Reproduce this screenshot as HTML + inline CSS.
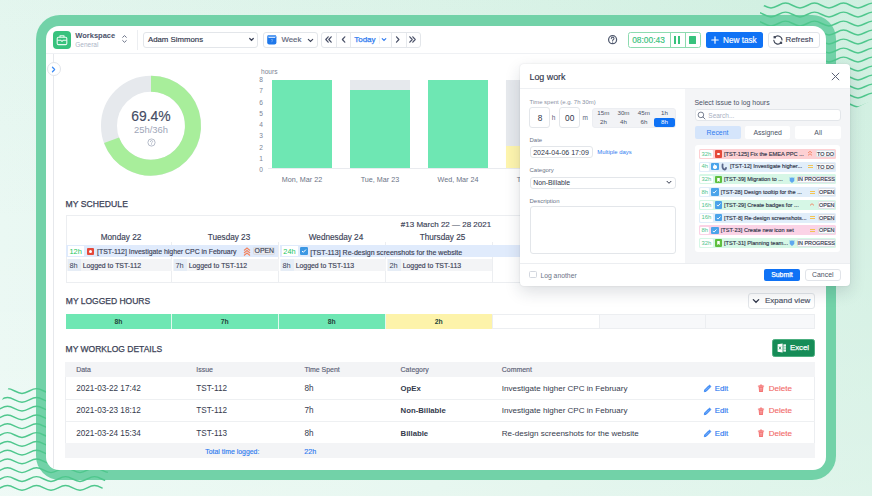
<!DOCTYPE html>
<html><head><meta charset="utf-8">
<style>
*{box-sizing:border-box;margin:0;padding:0}
html,body{width:872px;height:496px;overflow:hidden}
body{font-family:"Liberation Sans",sans-serif;position:relative;background:linear-gradient(180deg,rgba(100,200,150,0.05) 0%,rgba(255,255,255,0) 45%,rgba(255,255,255,0.22) 100%),linear-gradient(90deg,#eaf8f3 0%,#e1f5ec 50%,#d5f1e4 100%);color:#374151}
.a{position:absolute}
.t{position:absolute;white-space:nowrap;line-height:1}
#frame{left:36px;top:15px;width:800px;height:465px;border-radius:24px;background:#72d2a8}
#waves{left:0;top:0;width:872px;height:496px}
#panel{left:46px;top:26px;width:780px;height:444px;border-radius:13px;background:#fff;overflow:hidden}
.m{-webkit-text-stroke:0.25px currentColor}
.n{-webkit-text-stroke:0.15px currentColor}
.box{position:absolute;border:1px solid #e3e6ea;border-radius:3px;background:#fff}
</style></head>
<body>
<div id="frame" class="a"></div>
<svg id="waves" class="a" width="872" height="496" viewBox="0 0 872 496"><defs><clipPath id="c1"><polygon points="769,0 872,0 872,100 856,108 760,108 760,10"/></clipPath><clipPath id="c2"><polygon points="13,380 150,380 150,466 110,466 100,496 0,496 0,404 4,396"/></clipPath></defs><g fill="none" stroke="#4fc78d" stroke-width="1.45"><g clip-path="url(#c1)"><path d="M756.5,3.1C761.8,3.1 765.7,7.9 771.0,7.9C776.3,7.9 780.2,3.1 785.5,3.1C790.8,3.1 794.7,7.9 800.0,7.9C805.3,7.9 809.2,3.1 814.5,3.1C819.8,3.1 823.7,7.9 829.0,7.9C834.3,7.9 838.2,3.1 843.5,3.1C848.8,3.1 852.7,7.9 858.0,7.9C863.3,7.9 867.2,3.1 872.5,3.1C877.8,3.1 881.7,7.9 887.0,7.9"/><path d="M756.5,12.1C761.8,12.1 765.7,16.9 771.0,16.9C776.3,16.9 780.2,12.1 785.5,12.1C790.8,12.1 794.7,16.9 800.0,16.9C805.3,16.9 809.2,12.1 814.5,12.1C819.8,12.1 823.7,16.9 829.0,16.9C834.3,16.9 838.2,12.1 843.5,12.1C848.8,12.1 852.7,16.9 858.0,16.9C863.3,16.9 867.2,12.1 872.5,12.1C877.8,12.1 881.7,16.9 887.0,16.9"/><path d="M756.5,21.1C761.8,21.1 765.7,25.9 771.0,25.9C776.3,25.9 780.2,21.1 785.5,21.1C790.8,21.1 794.7,25.9 800.0,25.9C805.3,25.9 809.2,21.1 814.5,21.1C819.8,21.1 823.7,25.9 829.0,25.9C834.3,25.9 838.2,21.1 843.5,21.1C848.8,21.1 852.7,25.9 858.0,25.9C863.3,25.9 867.2,21.1 872.5,21.1C877.8,21.1 881.7,25.9 887.0,25.9"/><path d="M756.5,30.1C761.8,30.1 765.7,34.9 771.0,34.9C776.3,34.9 780.2,30.1 785.5,30.1C790.8,30.1 794.7,34.9 800.0,34.9C805.3,34.9 809.2,30.1 814.5,30.1C819.8,30.1 823.7,34.9 829.0,34.9C834.3,34.9 838.2,30.1 843.5,30.1C848.8,30.1 852.7,34.9 858.0,34.9C863.3,34.9 867.2,30.1 872.5,30.1C877.8,30.1 881.7,34.9 887.0,34.9"/><path d="M756.5,39.1C761.8,39.1 765.7,43.9 771.0,43.9C776.3,43.9 780.2,39.1 785.5,39.1C790.8,39.1 794.7,43.9 800.0,43.9C805.3,43.9 809.2,39.1 814.5,39.1C819.8,39.1 823.7,43.9 829.0,43.9C834.3,43.9 838.2,39.1 843.5,39.1C848.8,39.1 852.7,43.9 858.0,43.9C863.3,43.9 867.2,39.1 872.5,39.1C877.8,39.1 881.7,43.9 887.0,43.9"/><path d="M756.5,48.1C761.8,48.1 765.7,52.9 771.0,52.9C776.3,52.9 780.2,48.1 785.5,48.1C790.8,48.1 794.7,52.9 800.0,52.9C805.3,52.9 809.2,48.1 814.5,48.1C819.8,48.1 823.7,52.9 829.0,52.9C834.3,52.9 838.2,48.1 843.5,48.1C848.8,48.1 852.7,52.9 858.0,52.9C863.3,52.9 867.2,48.1 872.5,48.1C877.8,48.1 881.7,52.9 887.0,52.9"/><path d="M756.5,57.1C761.8,57.1 765.7,61.9 771.0,61.9C776.3,61.9 780.2,57.1 785.5,57.1C790.8,57.1 794.7,61.9 800.0,61.9C805.3,61.9 809.2,57.1 814.5,57.1C819.8,57.1 823.7,61.9 829.0,61.9C834.3,61.9 838.2,57.1 843.5,57.1C848.8,57.1 852.7,61.9 858.0,61.9C863.3,61.9 867.2,57.1 872.5,57.1C877.8,57.1 881.7,61.9 887.0,61.9"/><path d="M756.5,66.1C761.8,66.1 765.7,70.9 771.0,70.9C776.3,70.9 780.2,66.1 785.5,66.1C790.8,66.1 794.7,70.9 800.0,70.9C805.3,70.9 809.2,66.1 814.5,66.1C819.8,66.1 823.7,70.9 829.0,70.9C834.3,70.9 838.2,66.1 843.5,66.1C848.8,66.1 852.7,70.9 858.0,70.9C863.3,70.9 867.2,66.1 872.5,66.1C877.8,66.1 881.7,70.9 887.0,70.9"/><path d="M756.5,75.1C761.8,75.1 765.7,79.9 771.0,79.9C776.3,79.9 780.2,75.1 785.5,75.1C790.8,75.1 794.7,79.9 800.0,79.9C805.3,79.9 809.2,75.1 814.5,75.1C819.8,75.1 823.7,79.9 829.0,79.9C834.3,79.9 838.2,75.1 843.5,75.1C848.8,75.1 852.7,79.9 858.0,79.9C863.3,79.9 867.2,75.1 872.5,75.1C877.8,75.1 881.7,79.9 887.0,79.9"/><path d="M756.5,84.1C761.8,84.1 765.7,88.9 771.0,88.9C776.3,88.9 780.2,84.1 785.5,84.1C790.8,84.1 794.7,88.9 800.0,88.9C805.3,88.9 809.2,84.1 814.5,84.1C819.8,84.1 823.7,88.9 829.0,88.9C834.3,88.9 838.2,84.1 843.5,84.1C848.8,84.1 852.7,88.9 858.0,88.9C863.3,88.9 867.2,84.1 872.5,84.1C877.8,84.1 881.7,88.9 887.0,88.9"/><path d="M756.5,93.1C761.8,93.1 765.7,97.9 771.0,97.9C776.3,97.9 780.2,93.1 785.5,93.1C790.8,93.1 794.7,97.9 800.0,97.9C805.3,97.9 809.2,93.1 814.5,93.1C819.8,93.1 823.7,97.9 829.0,97.9C834.3,97.9 838.2,93.1 843.5,93.1C848.8,93.1 852.7,97.9 858.0,97.9C863.3,97.9 867.2,93.1 872.5,93.1C877.8,93.1 881.7,97.9 887.0,97.9"/><path d="M829.0,106.9C834.3,106.9 838.2,102.1 843.5,102.1C848.8,102.1 852.7,106.9 858.0,106.9C863.3,106.9 867.2,102.1 872.5,102.1"/></g><g clip-path="url(#c2)"><path d="M7.5,388.6C12.8,388.6 16.7,393.4 22.0,393.4C27.3,393.4 31.2,388.6 36.5,388.6C41.8,388.6 45.7,393.4 51.0,393.4C56.3,393.4 60.2,388.6 65.5,388.6C70.8,388.6 74.7,393.4 80.0,393.4C85.3,393.4 89.2,388.6 94.5,388.6C99.8,388.6 103.7,393.4 109.0,393.4C114.3,393.4 118.2,388.6 123.5,388.6C128.8,388.6 132.7,393.4 138.0,393.4C143.3,393.4 147.2,388.6 152.5,388.6"/><path d="M-7.0,402.2C-1.7,402.2 2.2,397.4 7.5,397.4C12.8,397.4 16.7,402.2 22.0,402.2C27.3,402.2 31.2,397.4 36.5,397.4C41.8,397.4 45.7,402.2 51.0,402.2C56.3,402.2 60.2,397.4 65.5,397.4C70.8,397.4 74.7,402.2 80.0,402.2C85.3,402.2 89.2,397.4 94.5,397.4C99.8,397.4 103.7,402.2 109.0,402.2C114.3,402.2 118.2,397.4 123.5,397.4C128.8,397.4 132.7,402.2 138.0,402.2C143.3,402.2 147.2,397.4 152.5,397.4"/><path d="M-7.0,411.0C-1.7,411.0 2.2,406.2 7.5,406.2C12.8,406.2 16.7,411.0 22.0,411.0C27.3,411.0 31.2,406.2 36.5,406.2C41.8,406.2 45.7,411.0 51.0,411.0C56.3,411.0 60.2,406.2 65.5,406.2C70.8,406.2 74.7,411.0 80.0,411.0C85.3,411.0 89.2,406.2 94.5,406.2C99.8,406.2 103.7,411.0 109.0,411.0C114.3,411.0 118.2,406.2 123.5,406.2C128.8,406.2 132.7,411.0 138.0,411.0C143.3,411.0 147.2,406.2 152.5,406.2"/><path d="M-7.0,419.8C-1.7,419.8 2.2,415.0 7.5,415.0C12.8,415.0 16.7,419.8 22.0,419.8C27.3,419.8 31.2,415.0 36.5,415.0C41.8,415.0 45.7,419.8 51.0,419.8C56.3,419.8 60.2,415.0 65.5,415.0C70.8,415.0 74.7,419.8 80.0,419.8C85.3,419.8 89.2,415.0 94.5,415.0C99.8,415.0 103.7,419.8 109.0,419.8C114.3,419.8 118.2,415.0 123.5,415.0C128.8,415.0 132.7,419.8 138.0,419.8C143.3,419.8 147.2,415.0 152.5,415.0"/><path d="M-7.0,428.6C-1.7,428.6 2.2,423.8 7.5,423.8C12.8,423.8 16.7,428.6 22.0,428.6C27.3,428.6 31.2,423.8 36.5,423.8C41.8,423.8 45.7,428.6 51.0,428.6C56.3,428.6 60.2,423.8 65.5,423.8C70.8,423.8 74.7,428.6 80.0,428.6C85.3,428.6 89.2,423.8 94.5,423.8C99.8,423.8 103.7,428.6 109.0,428.6C114.3,428.6 118.2,423.8 123.5,423.8C128.8,423.8 132.7,428.6 138.0,428.6C143.3,428.6 147.2,423.8 152.5,423.8"/><path d="M-7.0,437.4C-1.7,437.4 2.2,432.6 7.5,432.6C12.8,432.6 16.7,437.4 22.0,437.4C27.3,437.4 31.2,432.6 36.5,432.6C41.8,432.6 45.7,437.4 51.0,437.4C56.3,437.4 60.2,432.6 65.5,432.6C70.8,432.6 74.7,437.4 80.0,437.4C85.3,437.4 89.2,432.6 94.5,432.6C99.8,432.6 103.7,437.4 109.0,437.4C114.3,437.4 118.2,432.6 123.5,432.6C128.8,432.6 132.7,437.4 138.0,437.4C143.3,437.4 147.2,432.6 152.5,432.6"/><path d="M-7.0,446.2C-1.7,446.2 2.2,441.4 7.5,441.4C12.8,441.4 16.7,446.2 22.0,446.2C27.3,446.2 31.2,441.4 36.5,441.4C41.8,441.4 45.7,446.2 51.0,446.2C56.3,446.2 60.2,441.4 65.5,441.4C70.8,441.4 74.7,446.2 80.0,446.2C85.3,446.2 89.2,441.4 94.5,441.4C99.8,441.4 103.7,446.2 109.0,446.2C114.3,446.2 118.2,441.4 123.5,441.4C128.8,441.4 132.7,446.2 138.0,446.2C143.3,446.2 147.2,441.4 152.5,441.4"/><path d="M-7.0,455.0C-1.7,455.0 2.2,450.2 7.5,450.2C12.8,450.2 16.7,455.0 22.0,455.0C27.3,455.0 31.2,450.2 36.5,450.2C41.8,450.2 45.7,455.0 51.0,455.0C56.3,455.0 60.2,450.2 65.5,450.2C70.8,450.2 74.7,455.0 80.0,455.0C85.3,455.0 89.2,450.2 94.5,450.2C99.8,450.2 103.7,455.0 109.0,455.0C114.3,455.0 118.2,450.2 123.5,450.2C128.8,450.2 132.7,455.0 138.0,455.0C143.3,455.0 147.2,450.2 152.5,450.2"/><path d="M-7.0,463.8C-1.7,463.8 2.2,459.0 7.5,459.0C12.8,459.0 16.7,463.8 22.0,463.8C27.3,463.8 31.2,459.0 36.5,459.0C41.8,459.0 45.7,463.8 51.0,463.8C56.3,463.8 60.2,459.0 65.5,459.0C70.8,459.0 74.7,463.8 80.0,463.8C85.3,463.8 89.2,459.0 94.5,459.0C99.8,459.0 103.7,463.8 109.0,463.8C114.3,463.8 118.2,459.0 123.5,459.0C128.8,459.0 132.7,463.8 138.0,463.8C143.3,463.8 147.2,459.0 152.5,459.0"/><path d="M-7.0,472.6C-1.7,472.6 2.2,467.8 7.5,467.8C12.8,467.8 16.7,472.6 22.0,472.6C27.3,472.6 31.2,467.8 36.5,467.8C41.8,467.8 45.7,472.6 51.0,472.6C56.3,472.6 60.2,467.8 65.5,467.8C70.8,467.8 74.7,472.6 80.0,472.6C85.3,472.6 89.2,467.8 94.5,467.8C99.8,467.8 103.7,472.6 109.0,472.6C114.3,472.6 118.2,467.8 123.5,467.8C128.8,467.8 132.7,472.6 138.0,472.6"/><path d="M-7.0,481.4C-1.7,481.4 2.2,476.6 7.5,476.6C12.8,476.6 16.7,481.4 22.0,481.4C27.3,481.4 31.2,476.6 36.5,476.6C41.8,476.6 45.7,481.4 51.0,481.4C56.3,481.4 60.2,476.6 65.5,476.6C70.8,476.6 74.7,481.4 80.0,481.4C85.3,481.4 89.2,476.6 94.5,476.6C99.8,476.6 103.7,481.4 109.0,481.4C114.3,481.4 118.2,476.6 123.5,476.6C128.8,476.6 132.7,481.4 138.0,481.4"/><path d="M-7.0,490.2C-1.7,490.2 2.2,485.4 7.5,485.4C12.8,485.4 16.7,490.2 22.0,490.2C27.3,490.2 31.2,485.4 36.5,485.4C41.8,485.4 45.7,490.2 51.0,490.2C56.3,490.2 60.2,485.4 65.5,485.4C70.8,485.4 74.7,490.2 80.0,490.2C85.3,490.2 89.2,485.4 94.5,485.4C99.8,485.4 103.7,490.2 109.0,490.2C114.3,490.2 118.2,485.4 123.5,485.4C128.8,485.4 132.7,490.2 138.0,490.2"/></g></g></svg>
<div id="panel" class="a"></div>
<div id="content" class="a" style="left:0;top:0;width:872px;height:496px">
<!-- header -->
<div class="a" style="left:46px;top:53px;width:780px;height:1px;background:#eff1f4"></div>
<div class="a" style="left:53px;top:54px;width:1px;height:414px;background:#e6e8ec"></div>
<div class="a" style="left:46.5px;top:62.2px;width:14px;height:14px;border-radius:50%;border:1px solid #e1e4e9;background:#fff"></div>
<svg class="a" style="left:47px;top:62.7px" width="13" height="13" viewBox="0 0 13 13"><path d="M5.5 4.3 L7.6 6.5 L5.5 8.7" fill="none" stroke="#3a8af5" stroke-width="1.3" stroke-linecap="round" stroke-linejoin="round"/></svg>
<div class="a" style="left:53.2px;top:31px;width:18px;height:17.7px;border-radius:4px;background:#38c27d"></div>
<svg class="a" style="left:53.2px;top:31px" width="18" height="18" viewBox="0 0 18 18"><g fill="none" stroke="#e9fbf1" stroke-width="1.1" stroke-linejoin="round"><rect x="4.2" y="6.2" width="9.6" height="7.4" rx="1.2"/><path d="M7 6.2 V4.8 h4 V6.2"/><path d="M4.2 9.2 H7.6 L9 10.4 L10.4 9.2 H13.8"/></g></svg>
<div class="t" style="left:75.3px;top:31.6px;font-size:7.5px;font-weight:bold;color:#4a5169">Workspace</div>
<div class="t" style="left:75.3px;top:41.8px;font-size:6.5px;color:#acb4c7">General</div>
<svg class="a" style="left:121px;top:33px" width="7" height="12" viewBox="0 0 7 12"><path d="M1.7 4.3 L3.5 2.6 L5.3 4.3 M1.7 7.6 L3.5 9.3 L5.3 7.6" fill="none" stroke="#6b7388" stroke-width="1" stroke-linecap="round"/></svg>
<div class="a" style="left:137px;top:30px;width:1px;height:20px;background:#eceef1"></div>
<div class="box" style="left:143px;top:32.3px;width:115px;height:15.4px"></div>
<div class="t n" style="left:148px;top:36px;font-size:7.8px;color:#30364a">Adam Simmons</div>
<svg class="a" style="left:247.5px;top:37px" width="7" height="5" viewBox="0 0 7 5"><path d="M1.7 1.5 L3.5 3.3 L5.3 1.5" fill="none" stroke="#3d4459" stroke-width="1.25" stroke-linecap="round"/></svg>
<div class="box" style="left:262.5px;top:32.3px;width:55px;height:15.4px"></div>
<svg class="a" style="left:267px;top:35px" width="10" height="10" viewBox="0 0 10 10"><rect x="0.2" y="0.1" width="9.2" height="9.3" rx="2" fill="#1f78ea"/><path d="M0.2 2.1 a2 2 0 0 1 2 -2 h5.2 a2 2 0 0 1 2 2 v0.6 h-9.2 z" fill="#5c9ff2"/><rect x="1.6" y="2" width="6.4" height="0.9" fill="#d9e8ff"/><path d="M3.9 4.6 h1.8 l-1 2.6" fill="none" stroke="#7fb3f5" stroke-width="0.7"/></svg>
<div class="t n" style="left:281.5px;top:36px;font-size:7.8px;color:#5d6478">Week</div>
<svg class="a" style="left:307px;top:37.5px" width="7" height="5" viewBox="0 0 7 5"><path d="M1.3 1.3 L3.5 3.4 L5.7 1.3" fill="none" stroke="#3d4459" stroke-width="1.1" stroke-linecap="round"/></svg>
<div class="box" style="left:321px;top:32.3px;width:99.5px;height:15.4px"></div>
<div class="a" style="left:335.5px;top:33px;width:1px;height:14px;background:#e6e9ed"></div>
<div class="a" style="left:350.3px;top:33px;width:1px;height:14px;background:#e6e9ed"></div>
<div class="a" style="left:379.3px;top:36px;width:1px;height:8px;background:#eef0f3"></div>
<div class="a" style="left:390.7px;top:33px;width:1px;height:14px;background:#e6e9ed"></div>
<div class="a" style="left:405.5px;top:33px;width:1px;height:14px;background:#e6e9ed"></div>
<svg class="a" style="left:321px;top:32.3px" width="100" height="15" viewBox="0 0 100 15"><g fill="none" stroke="#4a5168" stroke-width="1.2" stroke-linecap="round" stroke-linejoin="round"><path d="M7.2 4.8 L4.8 7.5 L7.2 10.2 M10.2 4.8 L7.8 7.5 L10.2 10.2"/><path d="M23.8 4.8 L21.4 7.5 L23.8 10.2"/><path d="M75.5 4.8 L77.9 7.5 L75.5 10.2"/><path d="M88.8 4.8 L91.2 7.5 L88.8 10.2 M91.8 4.8 L94.2 7.5 L91.8 10.2"/></g><path d="M61.2 6.6 L63 8.4 L64.8 6.6" fill="none" stroke="#2f7bf0" stroke-width="1.1" stroke-linecap="round"/></svg>
<div class="t m" style="left:354.2px;top:36px;font-size:8px;color:#2f7bf0">Today</div>
<svg class="a" style="left:607px;top:34px" width="11" height="11" viewBox="0 0 11 11"><circle cx="5.6" cy="5.7" r="4" fill="none" stroke="#4f586d" stroke-width="1.25"/><path d="M4.3 4.6 a1.35 1.35 0 1 1 1.9 1.2 c-0.45 0.2 -0.55 0.45 -0.55 0.85" fill="none" stroke="#4f586d" stroke-width="1.05" stroke-linecap="round"/><circle cx="5.65" cy="8.05" r="0.6" fill="#4f586d"/></svg>
<div class="a" style="left:627.7px;top:32.2px;width:73px;height:15.5px;border:1px solid #8ddbb0;border-radius:2.5px;background:#fff"></div>
<div class="a" style="left:669.6px;top:32.2px;width:1px;height:15.5px;background:#8ddbb0"></div>
<div class="a" style="left:684.7px;top:32.2px;width:1px;height:15.5px;background:#8ddbb0"></div>
<div class="t n" style="left:632.2px;top:35.6px;font-size:8.4px;color:#37c27c">08:00:43</div>
<div class="a" style="left:674.2px;top:36.2px;width:2.3px;height:7.4px;background:#37c27c"></div>
<div class="a" style="left:678.1px;top:36.2px;width:2.3px;height:7.4px;background:#37c27c"></div>
<div class="a" style="left:688.8px;top:36px;width:7.6px;height:7.6px;background:#37c27c;border-radius:0.5px"></div>
<div class="a" style="left:705.8px;top:32.2px;width:57px;height:15.5px;border-radius:2.5px;background:#0f72f5"></div>
<svg class="a" style="left:710px;top:35px" width="10" height="10" viewBox="0 0 10 10"><path d="M5 1.8 V8.2 M1.8 5 H8.2" stroke="#fff" stroke-width="1.2" stroke-linecap="round"/></svg>
<div class="t n" style="left:723px;top:36.6px;font-size:8.2px;color:#fff">New task</div>
<div class="box" style="left:768.3px;top:32.2px;width:52.2px;height:15.5px;border-color:#e1e4e9"></div>
<svg class="a" style="left:772px;top:33.5px" width="12" height="12" viewBox="0 0 12 12"><g fill="none" stroke="#414859" stroke-width="1.1" stroke-linecap="round"><path d="M2.85 3.26 A4.1 4.1 0 0 1 10.00 6.00"/><path d="M8.95 8.74 A4.1 4.1 0 0 1 1.82 6.36"/></g><rect x="1.55" y="2.06" width="2.3" height="2.3" fill="#414859"/><rect x="7.85" y="7.64" width="2.3" height="2.3" fill="#414859"/></svg>
<div class="t n" style="left:785.5px;top:36.3px;font-size:7.9px;color:#3e4459">Refresh</div>

<!-- donut -->
<svg class="a" style="left:0;top:0" width="300" height="200" viewBox="0 0 300 200">
<circle cx="151" cy="125.7" r="42" fill="none" stroke="#e6e9ed" stroke-width="16"/>
<path d="M151,83.7 A42,42 0 1 1 111.57,140.18" fill="none" stroke="#a8ee9b" stroke-width="16"/>
</svg>
<div class="t n" style="left:131.3px;top:109.8px;font-size:13.9px;color:#434b63">69.4%</div>
<div class="t" style="left:134px;top:125px;font-size:9.4px;color:#9ea6b8">25h/36h</div>
<svg class="a" style="left:146.5px;top:138px" width="9" height="9" viewBox="0 0 9 9"><circle cx="4.5" cy="4.5" r="3.6" fill="none" stroke="#a3abbd" stroke-width="0.8"/><path d="M3.4 3.6 a1.1 1.1 0 1 1 1.6 1 c-0.4 0.2 -0.5 0.4 -0.5 0.7" fill="none" stroke="#a3abbd" stroke-width="0.75" stroke-linecap="round"/><circle cx="4.5" cy="6.5" r="0.45" fill="#a3abbd"/></svg>

<!-- chart -->
<div class="t" style="left:261px;top:69.1px;font-size:6.6px;color:#7b8394">hours</div>
<div class="t" style="left:257px;top:167.10px;width:8px;text-align:center;font-size:6.6px;color:#7b8394">0</div><div class="t" style="left:257px;top:155.85px;width:8px;text-align:center;font-size:6.6px;color:#7b8394">1</div><div class="t" style="left:257px;top:144.60px;width:8px;text-align:center;font-size:6.6px;color:#7b8394">2</div><div class="t" style="left:257px;top:133.35px;width:8px;text-align:center;font-size:6.6px;color:#7b8394">3</div><div class="t" style="left:257px;top:122.10px;width:8px;text-align:center;font-size:6.6px;color:#7b8394">4</div><div class="t" style="left:257px;top:110.85px;width:8px;text-align:center;font-size:6.6px;color:#7b8394">5</div><div class="t" style="left:257px;top:99.60px;width:8px;text-align:center;font-size:6.6px;color:#7b8394">6</div><div class="t" style="left:257px;top:88.35px;width:8px;text-align:center;font-size:6.6px;color:#7b8394">7</div><div class="t" style="left:257px;top:77.10px;width:8px;text-align:center;font-size:6.6px;color:#7b8394">8</div>
<div class="a" style="left:268px;top:168px;width:260px;height:1px;background:#e9ebef"></div>
<div class="a" style="left:272px;top:80px;width:60px;height:88px;background:#6ee7b3"></div>
<div class="a" style="left:350px;top:80px;width:60px;height:88px;background:#e6e9ed"></div>
<div class="a" style="left:350px;top:89.6px;width:60px;height:78.4px;background:#6ee7b3"></div>
<div class="a" style="left:428px;top:80px;width:60px;height:88px;background:#6ee7b3"></div>
<div class="a" style="left:506px;top:80px;width:60px;height:88px;background:#e6e9ed"></div>
<div class="a" style="left:506px;top:145.7px;width:60px;height:22.3px;background:#fef5ae"></div>
<div class="t" style="left:272px;top:176px;width:60px;text-align:center;font-size:7.2px;color:#6b7386">Mon, Mar 22</div>
<div class="t" style="left:350px;top:176px;width:60px;text-align:center;font-size:7.2px;color:#6b7386">Tue, Mar 23</div>
<div class="t" style="left:428px;top:176px;width:60px;text-align:center;font-size:7.2px;color:#6b7386">Wed, Mar 24</div>
<div class="t" style="left:506px;top:176px;width:60px;text-align:center;font-size:7.2px;color:#6b7386">Thu, Mar 25</div>

<!-- schedule -->
<div class="t m" style="left:65.5px;top:200px;font-size:8.6px;color:#3b4256;letter-spacing:0.05px">MY SCHEDULE</div>
<div class="a" style="left:65.5px;top:215.3px;width:749.5px;height:67.4px;border:1px solid #eceef1;background:#fff"></div>
<div class="a" style="left:171px;top:242.3px;width:1px;height:39.4px;background:#eceef1"></div><div class="a" style="left:278px;top:242.3px;width:1px;height:39.4px;background:#eceef1"></div><div class="a" style="left:385px;top:242.3px;width:1px;height:39.4px;background:#eceef1"></div><div class="a" style="left:492px;top:242.3px;width:1px;height:39.4px;background:#eceef1"></div><div class="a" style="left:598.5px;top:242.3px;width:1px;height:39.4px;background:#eceef1"></div><div class="a" style="left:705px;top:242.3px;width:1px;height:39.4px;background:#eceef1"></div><div class="t n" style="left:346px;top:221.2px;width:200px;text-align:center;font-size:8px;color:#3b4256">#13 March 22 — 28 2021</div><div class="t n" style="left:68px;top:233.6px;width:106px;text-align:center;font-size:8.2px;color:#3b4256">Monday 22</div><div class="t n" style="left:175.5px;top:233.6px;width:107px;text-align:center;font-size:8.2px;color:#3b4256">Tuesday 23</div><div class="t n" style="left:282.5px;top:233.6px;width:107px;text-align:center;font-size:8.2px;color:#3b4256">Wednesday 24</div><div class="t n" style="left:389.5px;top:233.6px;width:106px;text-align:center;font-size:8.2px;color:#3b4256">Thursday 25</div><div class="t n" style="left:495.5px;top:233.6px;width:107px;text-align:center;font-size:8.2px;color:#3b4256">Friday 26</div><div class="t n" style="left:602.5px;top:233.6px;width:106px;text-align:center;font-size:8.2px;color:#3b4256">Saturday 27</div><div class="t n" style="left:708.5px;top:233.6px;width:110px;text-align:center;font-size:8.2px;color:#3b4256">Sunday 28</div>
<div class="a" style="left:66.2px;top:244.8px;width:211.8px;height:12.3px;background:#e0ebfc"></div>
<div class="a" style="left:67.6px;top:246.2px;width:16.4px;height:10px;background:#fff"></div>
<div class="t" style="left:69.5px;top:247.9px;font-size:7.4px;color:#22c55e">12h</div>
<div class="a" style="left:86.5px;top:247.6px;width:7.9px;height:7.4px;border-radius:1px;background:#e5493a"></div>
<div class="a" style="left:89px;top:249.8px;width:3px;height:3px;border-radius:50%;background:#fff"></div>
<div class="t n" style="left:97.1px;top:249.2px;font-size:6.9px;color:#3b4256">[TST-112] Investigate higher CPC in February</div>
<svg class="a" style="left:243px;top:246.5px" width="8" height="9" viewBox="0 0 8 9"><path d="M1 3.5 L4 1 L7 3.5 M1 6 L4 3.5 L7 6 M1 8.5 L4 6 L7 8.5" fill="none" stroke="#f2835f" stroke-width="1.1"/></svg>
<div class="a" style="left:253.2px;top:246.6px;width:22.3px;height:8.9px;border-radius:1.5px;background:#e6e8ed;border:0.6px solid #dadde3"></div>
<div class="t n" style="left:253.2px;top:248.2px;width:22.3px;text-align:center;font-size:6.9px;color:#3b4256">OPEN</div>
<div class="a" style="left:280.3px;top:244.8px;width:318px;height:12.3px;background:#e0ebfc"></div>
<div class="a" style="left:281.6px;top:246.2px;width:16px;height:10px;background:#fff"></div>
<div class="t" style="left:283.3px;top:247.9px;font-size:7.4px;color:#22c55e">24h</div>
<div class="a" style="left:300.4px;top:247.4px;width:7.4px;height:7.4px;border-radius:1.2px;background:#3b97e3"></div>
<svg class="a" style="left:300.4px;top:247.4px" width="8" height="8" viewBox="0 0 8 8"><path d="M2 4 L3.3 5.3 L5.9 2.6" fill="none" stroke="#fff" stroke-width="1"/></svg>
<div class="t n" style="left:310.3px;top:249.2px;font-size:7.04px;color:#3b4256">[TST-113] Re-design screenshots for the website</div>
<div class="a" style="left:66.5px;top:258.6px;width:105px;height:12.8px;background:#f3f4f6"></div><div class="a" style="left:68px;top:258.6px;width:12.6px;height:12.8px;background:#e6edf6"></div><div class="t" style="left:69.5px;top:262.3px;font-size:7.4px;color:#3b4256">8h</div><div class="t n" style="left:82.7px;top:262.8px;font-size:6.9px;color:#3b4256">Logged to TST-112</div><div class="a" style="left:172.5px;top:258.6px;width:106px;height:12.8px;background:#f3f4f6"></div><div class="a" style="left:174px;top:258.6px;width:12.6px;height:12.8px;background:#e6edf6"></div><div class="t" style="left:175.5px;top:262.3px;font-size:7.4px;color:#3b4256">7h</div><div class="t n" style="left:188.7px;top:262.8px;font-size:6.9px;color:#3b4256">Logged to TST-112</div><div class="a" style="left:279.5px;top:258.6px;width:106px;height:12.8px;background:#f3f4f6"></div><div class="a" style="left:281px;top:258.6px;width:12.6px;height:12.8px;background:#e6edf6"></div><div class="t" style="left:282.5px;top:262.3px;font-size:7.4px;color:#3b4256">8h</div><div class="t n" style="left:295.7px;top:262.8px;font-size:6.9px;color:#3b4256">Logged to TST-113</div><div class="a" style="left:386.5px;top:258.6px;width:105px;height:12.8px;background:#f3f4f6"></div><div class="a" style="left:388px;top:258.6px;width:12.6px;height:12.8px;background:#e6edf6"></div><div class="t" style="left:389.5px;top:262.3px;font-size:7.4px;color:#3b4256">2h</div><div class="t n" style="left:402.7px;top:262.8px;font-size:6.9px;color:#3b4256">Logged to TST-113</div>
<!-- logged hours -->
<div class="t m" style="left:65.8px;top:296.7px;font-size:8.5px;color:#3b4256">MY LOGGED HOURS</div>
<div class="box" style="left:748.3px;top:293px;width:67px;height:15.8px;border-color:#e3e6ea"></div>
<svg class="a" style="left:752px;top:297px" width="8" height="8" viewBox="0 0 8 8"><path d="M1.3 2.6 L4 5.3 L6.7 2.6" fill="none" stroke="#30364a" stroke-width="1.3" stroke-linecap="round"/></svg>
<div class="t n" style="left:765px;top:297.3px;font-size:8px;color:#4b5266">Expand view</div>
<div class="a" style="left:65.5px;top:314px;width:749.5px;height:14.7px;border:1px solid #eceef1;background:#fff"></div>
<div class="a" style="left:65.5px;top:314px;width:105.8px;height:14.7px;background:#6ee7b3;"></div><div class="t" style="left:65.5px;top:319px;width:105.8px;text-align:center;font-size:6.8px;font-weight:bold;color:#24463a">8h</div><div class="a" style="left:171.3px;top:314px;width:107.0px;height:14.7px;background:#6ee7b3;border-left:1px solid #e3f8ee;"></div><div class="t" style="left:171.3px;top:319px;width:107.0px;text-align:center;font-size:6.8px;font-weight:bold;color:#24463a">7h</div><div class="a" style="left:278.3px;top:314px;width:107.0px;height:14.7px;background:#6ee7b3;border-left:1px solid #e3f8ee;"></div><div class="t" style="left:278.3px;top:319px;width:107.0px;text-align:center;font-size:6.8px;font-weight:bold;color:#24463a">8h</div><div class="a" style="left:385.3px;top:314px;width:106.7px;height:14.7px;background:#fdf3aa;border-left:1px solid #e3f8ee;"></div><div class="t" style="left:385.3px;top:319px;width:106.7px;text-align:center;font-size:6.8px;font-weight:bold;color:#24463a">2h</div><div class="a" style="left:492px;top:314px;width:106.7px;height:14.7px;background:#fff;border-left:1px solid #eceef1;border-top:1px solid #eceef1;border-bottom:1px solid #eceef1;"></div><div class="a" style="left:598.7px;top:314px;width:106.6px;height:14.7px;background:#f7f8fa;border-left:1px solid #eceef1;border-top:1px solid #eceef1;border-bottom:1px solid #eceef1;"></div><div class="a" style="left:705.3px;top:314px;width:109.7px;height:14.7px;background:#f7f8fa;border-left:1px solid #eceef1;border-top:1px solid #eceef1;border-bottom:1px solid #eceef1;border-right:1px solid #eceef1;"></div>
<!-- worklog -->
<div class="t m" style="left:65.6px;top:344.8px;font-size:8.5px;color:#3b4256">MY WORKLOG DETAILS</div>
<div class="a" style="left:772.2px;top:339.2px;width:42.5px;height:17.6px;border-radius:2.5px;background:#168c57;border:1px solid #4caf80"></div>
<svg class="a" style="left:777px;top:343px" width="10" height="10" viewBox="0 0 10 10"><path d="M0.6 1.2 L5.6 0.6 V9.4 L0.6 8.8 Z" fill="#fff"/><path d="M2.1 3.6 L3.9 6.4 M3.9 3.6 L2.1 6.4" stroke="#168c57" stroke-width="0.8"/><rect x="6.4" y="1.4" width="2.6" height="7.2" fill="#fff"/><path d="M6.4 3.3 H9 M6.4 5 H9 M6.4 6.7 H9" stroke="#168c57" stroke-width="0.5"/></svg>
<div class="t m" style="left:790px;top:344px;font-size:7.8px;color:#fff">Excel</div>
<div class="a" style="left:65px;top:362.3px;width:750px;height:95.4px;border:1px solid #eceef1;background:#fff"></div>
<div class="a" style="left:65px;top:362.3px;width:750px;height:14.4px;background:#f3f4f6"></div>
<div class="a" style="left:65.6px;top:399px;width:749.4px;height:1px;background:#eef0f2"></div>
<div class="a" style="left:65.6px;top:421px;width:749.4px;height:1px;background:#eef0f2"></div>
<div class="a" style="left:65px;top:443.2px;width:750px;height:14.5px;background:#f3f4f6"></div>
<div class="t n" style="left:76.2px;top:367.4px;font-size:6.95px;color:#5b6276">Data</div><div class="t n" style="left:196.3px;top:367.4px;font-size:6.95px;color:#5b6276">Issue</div><div class="t n" style="left:304.5px;top:367.4px;font-size:6.95px;color:#5b6276">Time Spent</div><div class="t n" style="left:400.6px;top:367.4px;font-size:6.95px;color:#5b6276">Category</div><div class="t n" style="left:501.8px;top:367.4px;font-size:6.95px;color:#5b6276">Comment</div><div class="t" style="left:76.2px;top:385px;font-size:8.2px;color:#353b4d">2021-03-22 17:42</div><div class="t" style="left:196.3px;top:385px;font-size:8.2px;color:#353b4d">TST-112</div><div class="t" style="left:304.5px;top:385px;font-size:8.2px;color:#353b4d">8h</div><div class="t" style="left:400.6px;top:385px;font-weight:bold;font-size:7.75px;color:#353b4d">OpEx</div><div class="t" style="left:501.8px;top:385px;font-size:8.05px;color:#353b4d">Investigate higher CPC in February</div><svg class="a" style="left:702.5px;top:384.4px" width="9" height="9" viewBox="0 0 9 9"><path d="M1.3 7.7 L1.6 5.9 L5.9 1.6 a0.9 0.9 0 0 1 1.3 0 l0.2 0.2 a0.9 0.9 0 0 1 0 1.3 L3.1 7.4 Z" fill="#3d8af5" stroke="#3d8af5" stroke-width="0.9" stroke-linejoin="round"/><path d="M2.4 6.6 L6.2 2.8" stroke="#a9cdfb" stroke-width="0.5"/></svg><div class="t n" style="left:714.8px;top:384.7px;font-size:7.8px;color:#2f7bf0">Edit</div><svg class="a" style="left:757px;top:384.4px" width="8" height="9" viewBox="0 0 8 9"><path d="M1.6 2.6 L2.1 8.1 H5.9 L6.4 2.6 Z" fill="#f47373"/><path d="M0.9 2.1 H7.1 M3 2.1 V1.1 H5 V2.1" fill="none" stroke="#f47373" stroke-width="1"/><path d="M2.6 4.3 H5.4 M2.7 6 H5.3" stroke="#fbd0d0" stroke-width="0.6"/></svg><div class="t n" style="left:768.7px;top:384.8px;font-size:8.05px;color:#f26b6b">Delete</div><div class="t" style="left:76.2px;top:407.1px;font-size:8.2px;color:#353b4d">2021-03-23 18:12</div><div class="t" style="left:196.3px;top:407.1px;font-size:8.2px;color:#353b4d">TST-112</div><div class="t" style="left:304.5px;top:407.1px;font-size:8.2px;color:#353b4d">7h</div><div class="t" style="left:400.6px;top:407.1px;font-weight:bold;font-size:7.75px;color:#353b4d">Non-Billable</div><div class="t" style="left:501.8px;top:407.1px;font-size:8.05px;color:#353b4d">Investigate higher CPC in February</div><svg class="a" style="left:702.5px;top:406.5px" width="9" height="9" viewBox="0 0 9 9"><path d="M1.3 7.7 L1.6 5.9 L5.9 1.6 a0.9 0.9 0 0 1 1.3 0 l0.2 0.2 a0.9 0.9 0 0 1 0 1.3 L3.1 7.4 Z" fill="#3d8af5" stroke="#3d8af5" stroke-width="0.9" stroke-linejoin="round"/><path d="M2.4 6.6 L6.2 2.8" stroke="#a9cdfb" stroke-width="0.5"/></svg><div class="t n" style="left:714.8px;top:406.8px;font-size:7.8px;color:#2f7bf0">Edit</div><svg class="a" style="left:757px;top:406.5px" width="8" height="9" viewBox="0 0 8 9"><path d="M1.6 2.6 L2.1 8.1 H5.9 L6.4 2.6 Z" fill="#f47373"/><path d="M0.9 2.1 H7.1 M3 2.1 V1.1 H5 V2.1" fill="none" stroke="#f47373" stroke-width="1"/><path d="M2.6 4.3 H5.4 M2.7 6 H5.3" stroke="#fbd0d0" stroke-width="0.6"/></svg><div class="t n" style="left:768.7px;top:406.90000000000003px;font-size:8.05px;color:#f26b6b">Delete</div><div class="t" style="left:76.2px;top:429.8px;font-size:8.2px;color:#353b4d">2021-03-24 15:34</div><div class="t" style="left:196.3px;top:429.8px;font-size:8.2px;color:#353b4d">TST-113</div><div class="t" style="left:304.5px;top:429.8px;font-size:8.2px;color:#353b4d">8h</div><div class="t" style="left:400.6px;top:429.8px;font-weight:bold;font-size:7.75px;color:#353b4d">Billable</div><div class="t" style="left:501.8px;top:429.8px;font-size:8.05px;color:#353b4d">Re-design screenshots for the website</div><svg class="a" style="left:702.5px;top:429.2px" width="9" height="9" viewBox="0 0 9 9"><path d="M1.3 7.7 L1.6 5.9 L5.9 1.6 a0.9 0.9 0 0 1 1.3 0 l0.2 0.2 a0.9 0.9 0 0 1 0 1.3 L3.1 7.4 Z" fill="#3d8af5" stroke="#3d8af5" stroke-width="0.9" stroke-linejoin="round"/><path d="M2.4 6.6 L6.2 2.8" stroke="#a9cdfb" stroke-width="0.5"/></svg><div class="t n" style="left:714.8px;top:429.5px;font-size:7.8px;color:#2f7bf0">Edit</div><svg class="a" style="left:757px;top:429.2px" width="8" height="9" viewBox="0 0 8 9"><path d="M1.6 2.6 L2.1 8.1 H5.9 L6.4 2.6 Z" fill="#f47373"/><path d="M0.9 2.1 H7.1 M3 2.1 V1.1 H5 V2.1" fill="none" stroke="#f47373" stroke-width="1"/><path d="M2.6 4.3 H5.4 M2.7 6 H5.3" stroke="#fbd0d0" stroke-width="0.6"/></svg><div class="t n" style="left:768.7px;top:429.6px;font-size:8.05px;color:#f26b6b">Delete</div><div class="t n" style="left:205.3px;top:448.5px;font-size:6.9px;color:#2f7bf0">Total time logged:</div><div class="t n" style="left:304.2px;top:448px;font-size:7.2px;color:#2f7bf0">22h</div>
<!-- modal -->
<div class="a" style="left:520.3px;top:64.4px;width:329.5px;height:221.5px;border-radius:4px;background:#fff;box-shadow:0 6px 16px rgba(30,40,60,0.15),0 0 2px rgba(30,40,60,0.12);overflow:hidden">
 <div class="a" style="left:0;top:23.3px;width:100%;height:1px;background:#eef0f3"></div>
 <div class="a" style="left:165px;top:24.3px;width:165px;height:174.5px;background:#f4f5f7"></div>
 <div class="a" style="left:0;top:198.6px;width:100%;height:1px;background:#eceef1"></div>
</div>
<div class="t n" style="left:529.5px;top:73.3px;font-size:8.9px;color:#30364a">Log work</div>
<svg class="a" style="left:830px;top:71px" width="11" height="11" viewBox="0 0 11 11"><path d="M2.1 2.1 L8.9 8.9 M8.9 2.1 L2.1 8.9" stroke="#5b6276" stroke-width="1" stroke-linecap="round"/></svg>
<div class="t" style="left:529.5px;top:99.6px;font-size:5.95px;color:#8a91a3">Time spent (e.g. 7h 30m)</div>
<div class="box" style="left:529px;top:107.2px;width:21.4px;height:20.4px;border-color:#e3e6ea"></div>
<div class="t" style="left:529.5px;top:113.5px;width:21.1px;text-align:center;font-size:8.3px;color:#30364a">8</div>
<div class="t" style="left:551.8px;top:114.5px;font-size:6.5px;color:#5b6276">h</div>
<div class="box" style="left:558.7px;top:107.2px;width:21.6px;height:20.4px;border-color:#e3e6ea"></div>
<div class="t" style="left:559px;top:113.5px;width:21.4px;text-align:center;font-size:8.3px;color:#30364a">00</div>
<div class="t" style="left:582.5px;top:114.5px;font-size:6.5px;color:#5b6276">m</div>
<div class="a" style="left:591.9px;top:107.6px;width:84px;height:20.9px;border-radius:3px;background:#f2f3f6;border:1px solid #eceef2"></div>
<div class="a" style="left:654.2px;top:117.9px;width:20.4px;height:9.3px;border-radius:2px;background:#0f72f5"></div>
<div class="t" style="left:593.4px;top:110px;width:20px;text-align:center;font-size:6.2px;color:#4b5266">15m</div><div class="t" style="left:613.5px;top:110px;width:20px;text-align:center;font-size:6.2px;color:#4b5266">30m</div><div class="t" style="left:633.9px;top:110px;width:20px;text-align:center;font-size:6.2px;color:#4b5266">45m</div><div class="t" style="left:654.5px;top:110px;width:20px;text-align:center;font-size:6.2px;color:#4b5266">1h</div><div class="t" style="left:593.4px;top:119.4px;width:20px;text-align:center;font-size:6.2px;color:#4b5266">2h</div><div class="t" style="left:613.5px;top:119.4px;width:20px;text-align:center;font-size:6.2px;color:#4b5266">4h</div><div class="t" style="left:633.9px;top:119.4px;width:20px;text-align:center;font-size:6.2px;color:#4b5266">6h</div><div class="t" style="left:654.5px;top:119.4px;width:20px;text-align:center;font-size:6.2px;color:#fff">8h</div>
<div class="t" style="left:529.5px;top:137px;font-size:6px;color:#6b7386">Date</div>
<div class="box" style="left:529.5px;top:146.2px;width:63px;height:12.3px;border-color:#e3e6ea"></div>
<div class="t" style="left:533.2px;top:149px;font-size:7.05px;color:#30364a">2024-04-06 17:09</div>
<div class="t" style="left:597.3px;top:150.4px;font-size:5.9px;color:#2f7bf0">Multiple days</div>
<div class="t" style="left:529.5px;top:167.4px;font-size:6px;color:#6b7386">Category</div>
<div class="box" style="left:529.5px;top:176.5px;width:146.5px;height:12.4px;border-color:#e3e6ea"></div>
<div class="t" style="left:533.2px;top:180.3px;font-size:6.85px;color:#30364a">Non-Billable</div>
<svg class="a" style="left:666px;top:180px" width="6" height="5" viewBox="0 0 6 5"><path d="M1 1.3 L3 3.3 L5 1.3" fill="none" stroke="#30364a" stroke-width="1" stroke-linecap="round"/></svg>
<div class="t" style="left:529.5px;top:197.7px;font-size:6px;color:#6b7386">Description</div>
<div class="box" style="left:529.5px;top:206.3px;width:146.5px;height:47.8px;border-color:#e3e6ea"></div>
<div class="a" style="left:529.2px;top:270.9px;width:7.6px;height:7.6px;border:1px solid #d3d7df;border-radius:1.5px;background:#fff"></div>
<div class="t" style="left:540.4px;top:272.6px;font-size:6.8px;color:#6b7386">Log another</div>
<div class="a" style="left:763.7px;top:268.8px;width:36.4px;height:12.5px;border-radius:2px;background:#0f72f5"></div>
<div class="t m" style="left:763.7px;top:272.1px;width:36.4px;text-align:center;font-size:6.9px;color:#fff">Submit</div>
<div class="box" style="left:804.6px;top:268.8px;width:36.4px;height:12.5px;border-color:#e1e4e9"></div>
<div class="t" style="left:804.6px;top:272.1px;width:36.4px;text-align:center;font-size:6.9px;color:#4b5266">Cancel</div>

<div class="t" style="left:694.5px;top:99.8px;font-size:6.9px;color:#4b5266">Select issue to log hours</div>
<div class="box" style="left:694.5px;top:109px;width:146.5px;height:12px;border-color:#e3e6ea"></div>
<svg class="a" style="left:697px;top:110.6px" width="9" height="9" viewBox="0 0 9 9"><circle cx="3.9" cy="3.9" r="2.8" fill="none" stroke="#6b7386" stroke-width="0.9"/><path d="M6 6 L8 8" stroke="#6b7386" stroke-width="0.9" stroke-linecap="round"/></svg>
<div class="t" style="left:708.3px;top:112.7px;font-size:6.5px;color:#a9b0bf">Search...</div>
<div class="a" style="left:694.5px;top:126px;width:46px;height:12.7px;border-radius:2px;background:#d5e5fb"></div>
<div class="t" style="left:694.5px;top:129.7px;width:46px;text-align:center;font-size:6.9px;color:#2f7bf0">Recent</div>
<div class="a" style="left:745px;top:126px;width:45.4px;height:12.7px;border-radius:2px;background:#fff"></div>
<div class="t" style="left:745px;top:129.7px;width:45.4px;text-align:center;font-size:6.9px;color:#4b5266">Assigned</div>
<div class="a" style="left:795.3px;top:126px;width:45.7px;height:12.7px;border-radius:2px;background:#fff"></div>
<div class="t" style="left:795.3px;top:129.7px;width:45.7px;text-align:center;font-size:6.9px;color:#4b5266">All</div>
<div class="a" style="left:695.3px;top:144.8px;width:144.8px;height:107.3px;border-radius:3px;background:#fff"></div>
<div class="a" style="left:699.2px;top:148.90px;width:136.8px;height:10px;border-radius:1.5px;background:#fdd0d3"></div><div class="a" style="left:700px;top:150.00px;width:12.8px;height:7.8px;border-radius:1px;background:#fff"></div><div class="t" style="left:700px;top:151.50px;width:12.8px;text-align:center;font-size:5.9px;color:#4fc48d">32h</div><div class="a" style="left:714.8px;top:150.00px;width:6.9px;height:7.6px;border-radius:1px;background:#e5493a"></div><div class="a" style="left:717.0px;top:152.60px;width:2.5px;height:2.5px;border-radius:50%;background:#fff"></div><div class="t n" style="left:724.0px;top:151.70px;font-size:5.65px;color:#30364a">[TST-125] Fix the EMEA PPC ...</div><div class="a" style="left:816px;top:150.10px;width:19.2px;height:7.4px;border-radius:1px;background:#fafafb;border:0.6px solid #dfe2e7"></div><div class="t n" style="left:816px;top:151.90px;width:19.2px;text-align:center;font-size:5.4px;color:#30364a">TO DO</div><svg class="a" style="left:807px;top:150.40px" width="6" height="7" viewBox="0 0 6 7"><path d="M1 3 L3 1.3 L5 3 M1 5.4 L3 3.7 L5 5.4" fill="none" stroke="#f47f5f" stroke-width="0.9"/></svg><div class="a" style="left:699.2px;top:161.66px;width:136.8px;height:10px;border-radius:1.5px;background:#e1eefa"></div><div class="a" style="left:700px;top:162.76px;width:9.4px;height:7.8px;border-radius:1px;background:#fff"></div><div class="t" style="left:700px;top:164.26px;width:9.4px;text-align:center;font-size:5.9px;color:#4fc48d">4h</div><div class="a" style="left:711.4px;top:162.76px;width:7.2px;height:7.6px;border-radius:1px;background:#4aa3ea"></div><div class="a" style="left:713.4px;top:165.26px;width:3.4px;height:3.4px;border-radius:50%;background:#fff"></div><div class="a" style="left:713.6999999999999px;top:163.86px;width:1px;height:1.4px;background:#bfe0fa"></div><svg class="a" style="left:721.4px;top:162.86px" width="6" height="8" viewBox="0 0 6 8"><path d="M1.6 1.3 C1.3 3.5 1.5 6.3 3.5 6.5 C4.3 6.6 4.8 6 5 5" fill="none" stroke="#5a678a" stroke-width="1.8" stroke-linecap="round"/></svg><div class="t n" style="left:730.0px;top:164.46px;font-size:5.65px;color:#30364a">[TST-12] Investigate higher...</div><div class="a" style="left:816px;top:162.86px;width:19.2px;height:7.4px;border-radius:1px;background:#fafafb;border:0.6px solid #dfe2e7"></div><div class="t n" style="left:816px;top:164.66px;width:19.2px;text-align:center;font-size:5.4px;color:#30364a">TO DO</div><div class="a" style="left:807.9px;top:165.26px;width:5.3px;height:1px;background:#f3c451"></div><div class="a" style="left:807.9px;top:167.26px;width:5.3px;height:1px;background:#f3c451"></div><div class="a" style="left:699.2px;top:174.42px;width:136.8px;height:10px;border-radius:1.5px;background:#d6f7e6"></div><div class="a" style="left:700px;top:175.52px;width:12.8px;height:7.8px;border-radius:1px;background:#fff"></div><div class="t" style="left:700px;top:177.02px;width:12.8px;text-align:center;font-size:5.9px;color:#4fc48d">32h</div><div class="a" style="left:714.8px;top:175.52px;width:6.9px;height:7.6px;border-radius:1px;background:#5fbf3f"></div><svg class="a" style="left:714.8px;top:175.52px" width="7" height="8" viewBox="0 0 7 8"><path d="M2.2 2 H4.8 V6 L3.5 5 L2.2 6 Z" fill="#fff"/></svg><div class="t n" style="left:724.0px;top:177.22px;font-size:5.65px;color:#30364a">[TST-39] Migration to ...</div><div class="a" style="left:797.3px;top:175.62px;width:37.9px;height:7.4px;border-radius:1px;background:#fafafb;border:0.6px solid #dfe2e7"></div><div class="t n" style="left:797.3px;top:177.42px;width:37.9px;text-align:center;font-size:5.4px;color:#30364a">IN PROGRESS</div><svg class="a" style="left:789.0px;top:175.62px" width="6" height="8" viewBox="0 0 6 8"><path d="M0.7 1 L1.8 2 L3 1.2 L4.2 2 L5.3 1 V5 L3 7 L0.7 5 Z" fill="#5ea8ef"/></svg><div class="a" style="left:699.2px;top:187.18px;width:136.8px;height:10px;border-radius:1.5px;background:#e1eefa"></div><div class="a" style="left:700px;top:188.28px;width:9.4px;height:7.8px;border-radius:1px;background:#fff"></div><div class="t" style="left:700px;top:189.78px;width:9.4px;text-align:center;font-size:5.9px;color:#4fc48d">8h</div><div class="a" style="left:711.4px;top:188.28px;width:7.2px;height:7.6px;border-radius:1px;background:#4aa3ea"></div><svg class="a" style="left:711.4px;top:188.28px" width="7.2" height="7.6" viewBox="0 0 7.2 7.6"><path d="M1.8 3.9 L3 5.1 L5.5 2.5" fill="none" stroke="#fff" stroke-width="0.9"/></svg><div class="t n" style="left:720.7px;top:189.98px;font-size:5.65px;color:#30364a">[TST-28] Design tooltip for the ...</div><div class="a" style="left:818.3px;top:188.38px;width:16.9px;height:7.4px;border-radius:1px;background:#fafafb;border:0.6px solid #dfe2e7"></div><div class="t n" style="left:818.3px;top:190.18px;width:16.9px;text-align:center;font-size:5.4px;color:#30364a">OPEN</div><div class="a" style="left:810.1999999999999px;top:190.78px;width:5.3px;height:1px;background:#f3c451"></div><div class="a" style="left:810.1999999999999px;top:192.78px;width:5.3px;height:1px;background:#f3c451"></div><div class="a" style="left:699.2px;top:199.94px;width:136.8px;height:10px;border-radius:1.5px;background:#d6f7e6"></div><div class="a" style="left:700px;top:201.04px;width:12.8px;height:7.8px;border-radius:1px;background:#fff"></div><div class="t" style="left:700px;top:202.54px;width:12.8px;text-align:center;font-size:5.9px;color:#4fc48d">16h</div><div class="a" style="left:714.8px;top:201.04px;width:7.2px;height:7.6px;border-radius:1px;background:#4aa3ea"></div><svg class="a" style="left:714.8px;top:201.04px" width="7.2" height="7.6" viewBox="0 0 7.2 7.6"><path d="M1.8 3.9 L3 5.1 L5.5 2.5" fill="none" stroke="#fff" stroke-width="0.9"/></svg><div class="t n" style="left:724.1px;top:202.74px;font-size:5.65px;color:#30364a">[TST-29] Create badges for ...</div><div class="a" style="left:818.3px;top:201.14px;width:16.9px;height:7.4px;border-radius:1px;background:#fafafb;border:0.6px solid #dfe2e7"></div><div class="t n" style="left:818.3px;top:202.94px;width:16.9px;text-align:center;font-size:5.4px;color:#30364a">OPEN</div><svg class="a" style="left:809.3px;top:201.44px" width="6" height="7" viewBox="0 0 6 7"><path d="M1 4.4 L3 2.7 L5 4.4" fill="none" stroke="#f47f5f" stroke-width="0.9"/></svg><div class="a" style="left:699.2px;top:212.70px;width:136.8px;height:10px;border-radius:1.5px;background:#e1eefa"></div><div class="a" style="left:700px;top:213.80px;width:12.8px;height:7.8px;border-radius:1px;background:#fff"></div><div class="t" style="left:700px;top:215.30px;width:12.8px;text-align:center;font-size:5.9px;color:#4fc48d">16h</div><div class="a" style="left:714.8px;top:213.80px;width:7.2px;height:7.6px;border-radius:1px;background:#4aa3ea"></div><svg class="a" style="left:714.8px;top:213.80px" width="7.2" height="7.6" viewBox="0 0 7.2 7.6"><path d="M1.8 3.9 L3 5.1 L5.5 2.5" fill="none" stroke="#fff" stroke-width="0.9"/></svg><div class="t n" style="left:724.1px;top:215.50px;font-size:5.65px;color:#30364a">[TST-8] Re-design screenshots...</div><div class="a" style="left:818.3px;top:213.90px;width:16.9px;height:7.4px;border-radius:1px;background:#fafafb;border:0.6px solid #dfe2e7"></div><div class="t n" style="left:818.3px;top:215.70px;width:16.9px;text-align:center;font-size:5.4px;color:#30364a">OPEN</div><div class="a" style="left:810.1999999999999px;top:216.30px;width:5.3px;height:1px;background:#f3c451"></div><div class="a" style="left:810.1999999999999px;top:218.30px;width:5.3px;height:1px;background:#f3c451"></div><div class="a" style="left:699.2px;top:225.46px;width:136.8px;height:10px;border-radius:1.5px;background:#fbd3e6"></div><div class="a" style="left:700px;top:226.56px;width:9.4px;height:7.8px;border-radius:1px;background:#fff"></div><div class="t" style="left:700px;top:228.06px;width:9.4px;text-align:center;font-size:5.9px;color:#4fc48d">8h</div><div class="a" style="left:711.4px;top:226.56px;width:7.2px;height:7.6px;border-radius:1px;background:#4aa3ea"></div><svg class="a" style="left:711.4px;top:226.56px" width="7.2" height="7.6" viewBox="0 0 7.2 7.6"><path d="M1.8 3.9 L3 5.1 L5.5 2.5" fill="none" stroke="#fff" stroke-width="0.9"/></svg><div class="t n" style="left:720.7px;top:228.26px;font-size:5.65px;color:#30364a">[TST-23] Create new icon set</div><div class="a" style="left:818.3px;top:226.66px;width:16.9px;height:7.4px;border-radius:1px;background:#fafafb;border:0.6px solid #dfe2e7"></div><div class="t n" style="left:818.3px;top:228.46px;width:16.9px;text-align:center;font-size:5.4px;color:#30364a">OPEN</div><div class="a" style="left:810.1999999999999px;top:229.06px;width:5.3px;height:1px;background:#f3c451"></div><div class="a" style="left:810.1999999999999px;top:231.06px;width:5.3px;height:1px;background:#f3c451"></div><div class="a" style="left:699.2px;top:238.22px;width:136.8px;height:10px;border-radius:1.5px;background:#d6f7e6"></div><div class="a" style="left:700px;top:239.32px;width:12.8px;height:7.8px;border-radius:1px;background:#fff"></div><div class="t" style="left:700px;top:240.82px;width:12.8px;text-align:center;font-size:5.9px;color:#4fc48d">32h</div><div class="a" style="left:714.8px;top:239.32px;width:6.9px;height:7.6px;border-radius:1px;background:#5fbf3f"></div><svg class="a" style="left:714.8px;top:239.32px" width="7" height="8" viewBox="0 0 7 8"><path d="M2.2 2 H4.8 V6 L3.5 5 L2.2 6 Z" fill="#fff"/></svg><div class="t n" style="left:724.0px;top:241.02px;font-size:5.65px;color:#30364a">[TST-31] Planning team...</div><div class="a" style="left:797.3px;top:239.42px;width:37.9px;height:7.4px;border-radius:1px;background:#fafafb;border:0.6px solid #dfe2e7"></div><div class="t n" style="left:797.3px;top:241.22px;width:37.9px;text-align:center;font-size:5.4px;color:#30364a">IN PROGRESS</div><svg class="a" style="left:789.0px;top:239.42px" width="6" height="8" viewBox="0 0 6 8"><path d="M0.7 1 L1.8 2 L3 1.2 L4.2 2 L5.3 1 V5 L3 7 L0.7 5 Z" fill="#5ea8ef"/></svg>
</div>
</body></html>
